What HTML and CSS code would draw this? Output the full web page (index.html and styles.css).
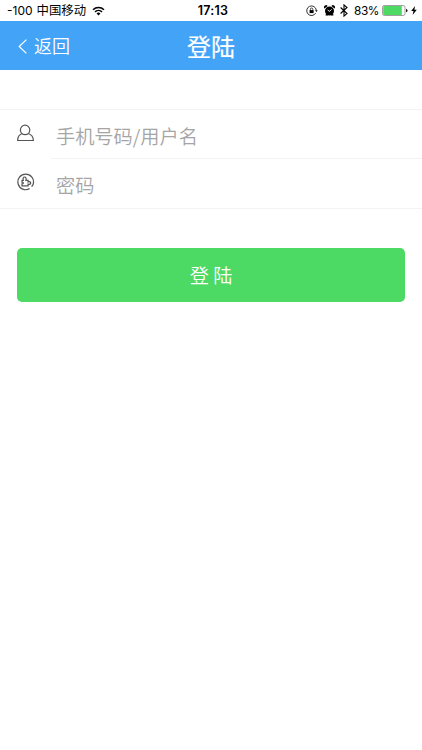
FILE: index.html
```html
<!DOCTYPE html>
<html lang="zh-CN">
<head>
<meta charset="utf-8">
<meta name="viewport" content="width=device-width, initial-scale=1">
<title>登陆</title>
<link rel="stylesheet" href="styles.css">
</head>
<body>
<div class="status">
  <div class="status-left">
    <span class="signal">-100</span>
    <span class="carrier">中国移动</span>
    <svg class="wifi" width="13" height="10" viewBox="0 0 14 11" fill="none" stroke="#000" stroke-width="1.8">
      <path d="M1 4.1a8.6 8.6 0 0 1 12 0M3.2 6.5a5.4 5.4 0 0 1 7.6 0"/>
      <path d="M4.9 8.3a3 3 0 0 1 4.2 0L7 10.5z" fill="#000" stroke="none"/>
    </svg>
  </div>
  <span class="time">17:13</span>
  <div class="status-right">
    <svg width="12" height="12" viewBox="0 0 12 12" fill="none" stroke="#000">
      <path d="M9.7 8.1A4.8 4.8 0 1 1 10.3 5.2" stroke-width=".8"/>
      <path d="M9 5.2h2.7l-1.3 1.9z" fill="#000" stroke="none"/>
      <path d="M4.4 5.3V4.2a1.2 1.2 0 0 1 2.4 0v1.1" stroke-width=".7"/>
      <path d="M3.6 5.1h4v3h-4z" fill="#000" stroke="none"/>
    </svg>
    <svg class="alarm" width="11" height="11" viewBox="0 0 11 11">
      <circle cx="5.5" cy="6" r="4.5"/>
      <path d="M.5 3.6A2 2 0 0 1 3.6.9zM10.5 3.6A2 2 0 0 0 7.4.9zM2 8.5h2v2H1.5zM9 8.5H7v2h2.5z"/>
      <path d="M3.6 5L5.6 6.4 7.6 4.3" fill="none" stroke="#fff" stroke-width=".9"/>
    </svg>
    <svg class="bluetooth" width="8" height="13" viewBox="0 0 8 13" fill="none" stroke="#000" stroke-width="1.1">
      <path d="M.6 3.5l6.4 6-3 2.6V.9l3 2.6-6.4 6"/>
    </svg>
    <span class="percent">83%</span>
    <svg class="battery" width="26" height="11" viewBox="0 0 26 11">
      <rect x=".5" y=".5" width="22.5" height="10" rx="1.8" fill="#fff" stroke="#777" stroke-width=".7"/>
      <path d="M2 1.1h17.8v8.8H2a.8.8 0 0 1-.8-.8V1.9a.8.8 0 0 1 .8-.8z" fill="#4cd964"/>
      <path d="M24.1 3.7q1.4.4 1.4 1.8t-1.4 1.8z"/>
    </svg>
    <svg class="bolt" width="6" height="9" viewBox="0 0 6 9"><path d="M4 0L.2 5h2.3L1.6 9 5.8 3.7H3.4z"/></svg>
  </div>
</div>
<header class="nav">
  <a class="back">
    <svg width="9" height="15" viewBox="0 0 9 15" fill="none" stroke="#fff" stroke-width="1.2"><path d="M8.4 .6L1.2 7.5 8.4 14.4"/></svg>
    <span>返回</span>
  </a>
  <h1 class="title">登陆</h1>
</header>
<main>
  <div class="fields">
    <div class="row">
      <svg class="icon" width="18" height="18" viewBox="0 0 18 18" fill="none" stroke="#555" stroke-width="1.2">
        <circle cx="8.1" cy="5.9" r="4.7"/>
        <path d="M5.2 9.5C2.2 10.6.7 12.7.6 16.5h15.8c-.1-3.8-1.8-5.9-5.2-7"/>
      </svg>
      <span class="field">手机号码/用户名</span>
    </div>
    <div class="row">
      <svg class="icon" width="18" height="18" viewBox="0 0 18 18" fill="none" stroke="#555" stroke-width="1.2">
        <path d="M12.7 15.6A7.8 7.8 0 1 1 16.2 11q-.4 1.7-1.7 2.5"/>
        <path d="M5 7.4h1.3C5.6 5.3 6.4 4 7.6 4s2 1.3 1.3 3.4h2.2v1.5c1.6-.5 2.6.1 2.6 1.1s-1 1.6-2.6 1.1v1.7H5v-2c1.8.2 1.9-1.8 0-1.6z"/>
      </svg>
      <span class="field">密码</span>
    </div>
  </div>
  <button class="submit" type="button">登 陆</button>
</main>
</body>
</html>
```
FILE: styles.css
```css
* { box-sizing: border-box; }
body {
  margin: 0;
  min-height: 750px;
  background: #fff;
  font-family: "Noto Sans CJK SC", sans-serif;
  font-weight: 350;
}
svg { display: block; flex: none; }
.status {
  height: 21px;
  display: grid;
  grid-template-columns: 1fr auto 1fr;
  align-items: center;
  padding: 0 5px 0 7px;
  color: #000;
  font: 400 12px/20px Inter, "Noto Sans CJK SC", sans-serif;
}
.status-left, .status-right { display: flex; align-items: center; white-space: nowrap; }
.status-right { justify-content: flex-end; }
.carrier { margin-left: 4px; font-size: 12.4px; }
.wifi { margin-left: 6px; }
.time { padding-left: 2px; font-size: 12.5px; font-weight: 600; letter-spacing: .2px; }
.alarm { margin-left: 6px; }
.bluetooth { margin-left: 5px; }
.percent { margin-left: 6px; font-size: 11.8px; letter-spacing: -.4px; }
.battery { margin-left: 3px; }
.bolt { margin-left: 3px; }
.nav {
  height: 49px;
  display: grid;
  grid-template-columns: 1fr auto 1fr;
  align-items: center;
  background: #43a4f7;
  color: #fff;
}
.back { display: flex; align-items: center; gap: 7px; padding-left: 18px; font-size: 18px; line-height: 26px; }
.back svg { position: relative; top: 1px; }
.back span { position: relative; top: -1px; }
.title { margin: 0; font-size: 24px; line-height: 34px; font-weight: 400; -webkit-text-stroke: .2px #fff; }
.fields { margin-top: 39px; border-top: 1px solid #f3f3f3; border-bottom: 1px solid #f3f3f3; }
.row { display: flex; height: 49px; padding-left: 17px; }
.icon { margin-top: 14px; }
.field { flex: 1; margin-left: 16px; padding: 4px 0 0 5px; font-size: 19.2px; line-height: 44px; color: #a5a5a5; }
.row:first-child .field { border-bottom: 1px solid #f3f3f3; }
.submit {
  display: block;
  width: 388px;
  height: 54px;
  margin: 39px 0 0 17px;
  padding: 0;
  border: 0;
  border-radius: 5px;
  background: #4cd964;
  color: #fff;
  font: 350 19.2px/54px "Noto Sans CJK SC", sans-serif;
}
```
